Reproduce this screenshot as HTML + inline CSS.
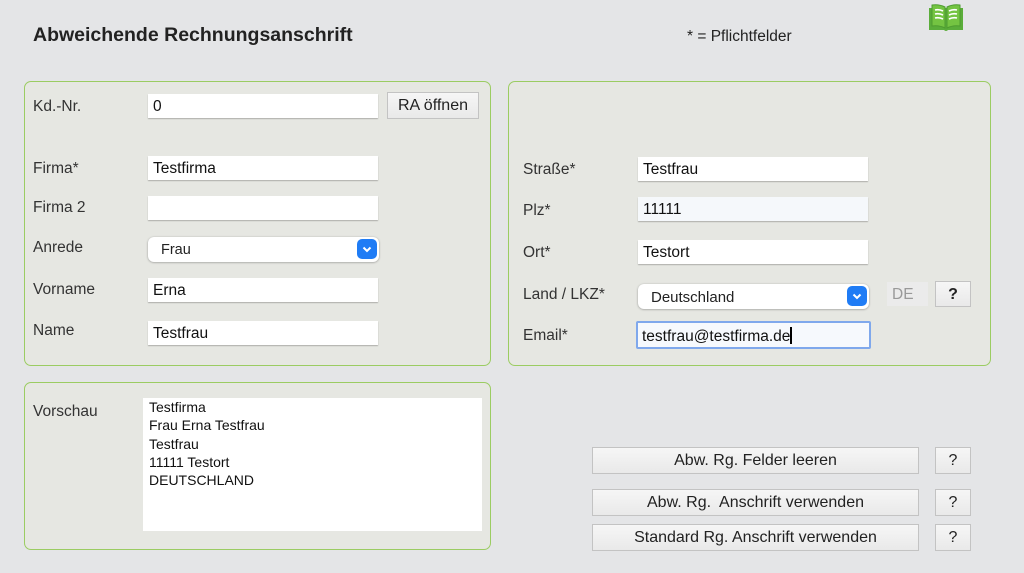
<!DOCTYPE html>
<html><head><meta charset="utf-8"><style>
*{box-sizing:border-box;margin:0;padding:0}
body{width:1024px;height:573px;background:#e4e5e7;font-family:"Liberation Sans",Arial,sans-serif;color:#222;position:relative;overflow:hidden}
.a{position:absolute}
.panel{position:absolute;background:#e6e7e2;border:1.5px solid #9bcc62;border-radius:7px}
.lbl{position:absolute;font-size:15.5px;color:#333}
.in{position:absolute;background:#fff;height:24px;box-shadow:0 1px 1px rgba(0,0,0,.25);font-size:15.5px;padding:4px 0 0 5px;color:#111}
.sel{position:absolute;background:#fff;height:25px;border-radius:6px;box-shadow:0 0.5px 2px rgba(0,0,0,.35);font-size:14.5px;padding:5px 0 0 13px;color:#222}
.chev{position:absolute;right:2px;top:2px;width:20px;height:20px;border-radius:5px;background:#1f7cf5}
.btn{position:absolute;background:linear-gradient(#f6f6f6,#e9e9e9);border:1.5px solid #c3c3c3;font-size:16px;text-align:center;color:#222}
</style></head><body>
<div class="a" style="left:33px;top:24px;font-size:19.5px;font-weight:bold;color:#222">Abweichende Rechnungsanschrift</div>
<div class="a" style="left:687px;top:28px;font-size:15.5px;color:#222">* = Pflichtfelder</div>
<svg class="a" style="left:927px;top:2px" width="38" height="30" viewBox="0 0 38 30">
<path d="M2 6 L2 28 L17 28 Q19 30 21 28 L36 28 L36 6 Z" fill="#5aad3a"/>
<path d="M5 3 Q12 2 18 5 L18 26 Q12 23 5 24 Z M20 5 Q26 2 33 3 L33 24 Q26 23 20 26 Z" fill="#74c442" stroke="#4e9c30" stroke-width="1"/>
<path d="M8 8 Q12 7 16 9 M8 12 Q12 11 16 13 M8 16 Q12 15 16 17 M22 9 Q26 7 30 8 M22 13 Q26 11 30 12 M22 17 Q26 15 30 16" stroke="#fff" stroke-width="1.6" fill="none"/>
</svg>

<div class="panel" style="left:24px;top:81px;width:467px;height:285px"></div>
<div class="panel" style="left:508px;top:81px;width:483px;height:285px"></div>
<div class="panel" style="left:24px;top:382px;width:467px;height:168px"></div>

<div class="lbl" style="left:33px;top:98px">Kd.-Nr.</div>
<div class="in" style="left:148px;top:94px;width:230px">0</div>
<div class="btn" style="left:387px;top:92px;width:92px;height:27px;padding-top:4px">RA öffnen</div>

<div class="lbl" style="left:33px;top:160px">Firma*</div>
<div class="in" style="left:148px;top:156px;width:230px">Testfirma</div>
<div class="lbl" style="left:33px;top:199px">Firma 2</div>
<div class="in" style="left:148px;top:196px;width:230px"></div>
<div class="lbl" style="left:33px;top:239px">Anrede</div>
<div class="sel" style="left:148px;top:237px;width:231px">Frau<div class="chev"><svg width="20" height="20"><path d="M6.5 8.5 L10 12 L13.5 8.5" stroke="#fff" stroke-width="2" fill="none"/></svg></div></div>
<div class="lbl" style="left:33px;top:281px">Vorname</div>
<div class="in" style="left:148px;top:278px;width:230px">Erna</div>
<div class="lbl" style="left:33px;top:322px">Name</div>
<div class="in" style="left:148px;top:321px;width:230px">Testfrau</div>

<div class="lbl" style="left:523px;top:161px">Straße*</div>
<div class="in" style="left:638px;top:157px;width:230px">Testfrau</div>
<div class="lbl" style="left:523px;top:202px">Plz*</div>
<div class="in" style="left:638px;top:197px;width:230px;background:#f5f8fb">11111</div>
<div class="lbl" style="left:523px;top:244px">Ort*</div>
<div class="in" style="left:638px;top:240px;width:230px">Testort</div>
<div class="lbl" style="left:523px;top:286px">Land / LKZ*</div>
<div class="sel" style="left:638px;top:284px;width:231px;font-size:15px">Deutschland<div class="chev"><svg width="20" height="20"><path d="M6.5 8.5 L10 12 L13.5 8.5" stroke="#fff" stroke-width="2" fill="none"/></svg></div></div>
<div class="a" style="left:887px;top:282px;width:41px;height:24px;background:#ebebeb;font-size:15.5px;color:#999;padding:4px 0 0 5px">DE</div>
<div class="btn" style="left:935px;top:281px;width:36px;height:26px;padding-top:4px;font-weight:bold">?</div>
<div class="lbl" style="left:523px;top:327px">Email*</div>
<div class="in" style="left:636px;top:321px;width:235px;height:28px;border:2.5px solid #7fa8ec;border-radius:2px;background:#f6f9fd;padding:4px 0 0 4px;box-shadow:none">testfrau@testfirma.de<span style="display:inline-block;width:1.5px;height:17px;background:#000;vertical-align:-3px"></span></div>

<div class="lbl" style="left:33px;top:403px">Vorschau</div>
<div class="a" style="left:143px;top:398px;width:339px;height:133px;background:#fff;font-size:14px;line-height:18.3px;padding:0 0 0 6px;color:#111">Testfirma<br>Frau Erna Testfrau<br>Testfrau<br>11111 Testort<br>DEUTSCHLAND</div>

<div class="btn" style="left:592px;top:447px;width:327px;height:27px;padding-top:4px">Abw. Rg. Felder leeren</div>
<div class="btn" style="left:935px;top:447px;width:36px;height:27px;padding-top:4px">?</div>
<div class="btn" style="left:592px;top:489px;width:327px;height:27px;padding-top:4px">Abw. Rg.&nbsp; Anschrift verwenden</div>
<div class="btn" style="left:935px;top:489px;width:36px;height:27px;padding-top:4px">?</div>
<div class="btn" style="left:592px;top:524px;width:327px;height:27px;padding-top:4px">Standard Rg. Anschrift verwenden</div>
<div class="btn" style="left:935px;top:524px;width:36px;height:27px;padding-top:4px">?</div>
</body></html>
